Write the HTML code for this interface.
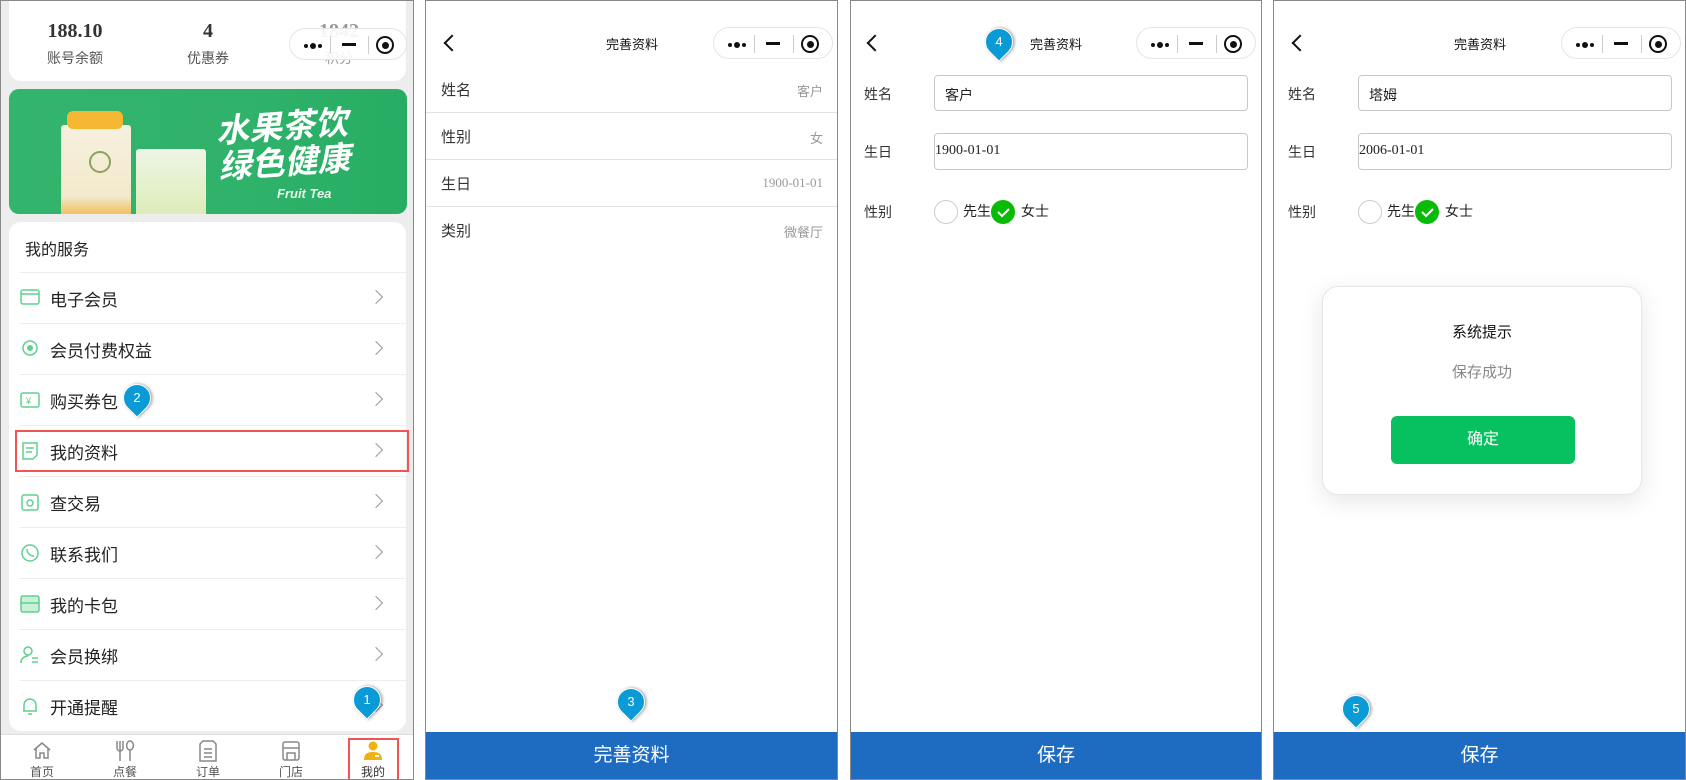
<!DOCTYPE html>
<html><head><meta charset="utf-8"><style>
*{margin:0;padding:0;box-sizing:border-box}
body{width:1686px;height:780px;position:relative;overflow:hidden;background:#fff;font-family:"Liberation Sans","Noto Sans CJK SC",sans-serif;color:#222}
.a{position:absolute}
.panel{position:absolute;top:0;height:780px;border:1.5px solid #888;overflow:hidden;background:#fff}
.cap{position:absolute;width:120px;height:32px;border:1px solid #e5e5e5;border-radius:16px;background:rgba(255,255,255,.9)}
.cap .d{position:absolute;top:15px;width:4px;height:4px;border-radius:50%;background:#111}
.cap .s{position:absolute;top:7px;width:1px;height:18px;background:#ccc}
.cap .m{position:absolute;left:52px;top:14px;width:14px;height:3px;background:#111}
.cap .o{position:absolute;left:94px;top:7px;width:18px;height:18px;border:2px solid #111;border-radius:50%}
.cap .o:after{content:"";position:absolute;left:3.5px;top:3.5px;width:7px;height:7px;border-radius:50%;background:#111}
.back{position:absolute;width:12px;height:12px;border-left:2px solid #111;border-bottom:2px solid #111;transform:rotate(45deg)}
.title{position:absolute;font-size:13px;color:#111;transform:translateX(-50%)}
.row{position:absolute;left:10px;right:0;height:51px;border-top:1px solid #eee}
.row span{position:absolute;left:31px;top:13px;font-size:17px;color:#222}
.row i{position:absolute;right:25px;top:19px;width:10px;height:10px;border-right:1.5px solid #999;border-top:1.5px solid #999;transform:rotate(45deg)}
.row svg{position:absolute;left:1px;top:15px}
.pin{position:absolute;width:28px;height:28px;border-radius:50% 50% 50% 0;transform:rotate(-45deg);background:#0a9bd6;border:1.5px solid #fff;box-shadow:1px 1px 3px rgba(0,0,0,.4)}
.pin b{position:absolute;left:0;top:0;width:100%;height:100%;transform:rotate(45deg);color:#fff;font-weight:normal;font-size:13px;text-align:center;line-height:26px}
.lab{position:absolute;font-size:15px;color:#333}
.val{position:absolute;font-size:13px;color:#999;right:14px}
.div{position:absolute;left:0;right:0;height:1px;background:#e2e2e2}
.btn{position:absolute;left:0;right:0;top:731px;height:49px;background:#1e6bc2;color:#fff;font-size:19px;text-align:center;line-height:47px}
.inp{position:absolute;border:1px solid #c8c8c8;border-radius:4px;height:36px}
.rad{position:absolute;width:24px;height:24px;border-radius:50%;border:1px solid #ccc}
.chk{position:absolute;width:24px;height:24px;border-radius:50%;background:#09bb07}
.tab{position:absolute;top:762px;font-size:12px;color:#555;transform:translateX(-50%)}
</style></head><body>

<!-- PANEL 1 -->
<div class="panel" style="left:0;width:414px;background:#ededed">
 <div class="a" style="left:8px;top:-10px;width:397px;height:90px;background:#fff;border-radius:12px"></div>
 <div class="a" style="left:74px;top:19px;transform:translateX(-50%);font:bold 20px 'Liberation Serif',serif;color:#333">188.10</div>
 <div class="a" style="left:74px;top:47px;transform:translateX(-50%);font-size:14px;color:#555;white-space:nowrap">账号余额</div>
 <div class="a" style="left:207px;top:19px;transform:translateX(-50%);font:bold 20px 'Liberation Serif',serif;color:#333">4</div>
 <div class="a" style="left:207px;top:47px;transform:translateX(-50%);font-size:14px;color:#555;white-space:nowrap">优惠券</div>
 <div class="a" style="left:338px;top:19px;transform:translateX(-50%);font:bold 20px 'Liberation Serif',serif;color:#999">1842</div>
 <div class="a" style="left:338px;top:47px;transform:translateX(-50%);font-size:14px;color:#999">积分</div>
 <div class="cap" style="left:288px;top:27px;width:118px"><span class="d" style="left:14px"></span><span class="d" style="left:20px;width:6px;height:6px;top:14px"></span><span class="d" style="left:28px"></span><span class="s" style="left:40px"></span><span class="m"></span><span class="s" style="left:78px"></span><span class="o" style="left:86px"></span></div>
 <div class="a" style="left:8px;top:88px;width:398px;height:125px;border-radius:10px;background:linear-gradient(90deg,#33b46c,#2fb26a 60%,#27ad63);overflow:hidden">
  <div class="a" style="left:52px;top:36px;width:70px;height:95px;background:linear-gradient(#f6f0df,#f3e9cc 75%,#f2b33c);border-radius:3px 3px 8px 8px"></div>
  <div class="a" style="left:58px;top:22px;width:56px;height:18px;background:#f5b632;border-radius:6px"></div>
  <div class="a" style="left:80px;top:62px;width:22px;height:22px;border:2px solid #8aa35a;border-radius:50%"></div>
  <div class="a" style="left:127px;top:60px;width:70px;height:70px;background:linear-gradient(#eef6e6,#dcebb5);border-radius:3px 3px 6px 6px"></div>
  <div class="a" style="left:208px;top:20px;font-size:33px;color:#fff;font-style:italic;font-weight:bold;line-height:36px;transform:rotate(-4deg)">水果茶饮<br>绿色健康</div>
  <div class="a" style="left:268px;top:97px;font-size:13px;color:#e8f6ec;font-style:italic;font-weight:bold">Fruit Tea</div>
 </div>
 <div class="a" style="left:8px;top:221px;width:397px;height:509px;background:#fff;border-radius:12px">
  <div class="a" style="left:16px;top:14px;font-size:16px;color:#222">我的服务</div>
  <div class="row" style="top:50px"><svg width="20" height="18"><rect x="1" y="2" width="18" height="14" rx="2" fill="none" stroke="#5fd08f" stroke-width="1.5"/><line x1="1" y1="6" x2="19" y2="6" stroke="#5fd08f" stroke-width="1.5"/></svg><span>电子会员</span><i></i></div>
  <div class="row" style="top:101px"><svg width="20" height="20"><circle cx="10" cy="9" r="7" fill="none" stroke="#5fd08f" stroke-width="1.5"/><circle cx="10" cy="9" r="3" fill="#5fd08f"/></svg><span>会员付费权益</span><i></i></div>
  <div class="row" style="top:152px"><svg width="20" height="20"><rect x="1" y="3" width="18" height="14" rx="2" fill="none" stroke="#5fd08f" stroke-width="1.5"/><text x="6" y="14" font-size="9" fill="#5fd08f">¥</text></svg><span>购买券包</span><i></i></div>
  <div class="row" style="top:203px"><svg width="20" height="20"><path d="M3 2h14v12l-4 4H3z" fill="none" stroke="#5fd08f" stroke-width="1.5"/><path d="M6 7h8M6 11h6" stroke="#5fd08f" stroke-width="1.5"/></svg><span>我的资料</span><i></i></div>
  <div class="row" style="top:254px"><svg width="20" height="20"><rect x="2" y="3" width="16" height="15" rx="2" fill="none" stroke="#5fd08f" stroke-width="1.5"/><circle cx="10" cy="11" r="3" fill="none" stroke="#5fd08f" stroke-width="1.5"/></svg><span>查交易</span><i></i></div>
  <div class="row" style="top:305px"><svg width="20" height="20"><circle cx="10" cy="10" r="8" fill="none" stroke="#5fd08f" stroke-width="1.5"/><path d="M7 6c0 4 3 7 7 7" fill="none" stroke="#5fd08f" stroke-width="1.5"/></svg><span>联系我们</span><i></i></div>
  <div class="row" style="top:356px"><svg width="20" height="20"><rect x="1" y="2" width="18" height="16" rx="2" fill="#c9f0d8" stroke="#5fd08f" stroke-width="1.5"/><path d="M1 9h18" stroke="#5fd08f" stroke-width="1.5"/></svg><span>我的卡包</span><i></i></div>
  <div class="row" style="top:407px"><svg width="20" height="20"><circle cx="8" cy="6" r="4" fill="none" stroke="#5fd08f" stroke-width="1.5"/><path d="M1 18c0-5 4-7 7-7M12 13h6M12 17h6" fill="none" stroke="#5fd08f" stroke-width="1.5"/></svg><span>会员换绑</span><i></i></div>
  <div class="row" style="top:458px"><svg width="20" height="20"><path d="M4 15V9a6 6 0 0112 0v6H3h14M8 18h4" fill="none" stroke="#5fd08f" stroke-width="1.5"/></svg><span>开通提醒</span><i></i></div>
 </div>
 <div class="a" style="left:14px;top:429px;width:394px;height:42px;border:2.5px solid #f05454"></div>
 <div class="a" style="left:0;top:733px;width:414px;height:47px;background:#fff;border-top:1px solid #ddd"></div>
 <svg class="a" style="left:31px;top:739px" width="20" height="20"><path d="M2 10L10 3l8 7M4 8v10h4v-5h4v5h4V8" fill="none" stroke="#888" stroke-width="1.5"/></svg>
 <svg class="a" style="left:114px;top:739px" width="20" height="22"><path d="M2 1v7a3 3 0 006 0V1M5 1v20M15 1a3 4 0 110 9 3 4 0 110-9M15 10v11" fill="none" stroke="#888" stroke-width="1.5"/></svg>
 <svg class="a" style="left:197px;top:739px" width="20" height="22"><path d="M5 1h10l3 3v17H2V4z" fill="none" stroke="#888" stroke-width="1.5"/><path d="M6 9h8M6 13h8M6 17h8" stroke="#888" stroke-width="1.5"/></svg>
 <svg class="a" style="left:280px;top:739px" width="20" height="22"><rect x="2" y="2" width="16" height="18" rx="2" fill="none" stroke="#888" stroke-width="1.5"/><path d="M2 8h16M6 20v-7h8v7" fill="none" stroke="#888" stroke-width="1.5"/></svg>
 <svg class="a" style="left:362px;top:740px" width="20" height="20"><circle cx="10" cy="5" r="4.5" fill="#f0b20e"/><path d="M1 19c0-6 3-8 9-8s9 2 9 8z" fill="#f0b20e"/><rect x="12" y="14" width="4" height="2" fill="#fff"/></svg>
 <div class="tab" style="left:41px">首页</div><div class="tab" style="left:124px">点餐</div><div class="tab" style="left:207px">订单</div><div class="tab" style="left:290px">门店</div><div class="tab" style="left:372px;color:#333">我的</div>
 <div class="a" style="left:347px;top:737px;width:51px;height:43px;border:2.5px solid #f05454"></div>
</div>
<div class="pin" style="left:353px;top:686px"><b>1</b></div>
<div class="pin" style="left:123px;top:384px"><b>2</b></div>

<!-- PANEL 2 -->
<div class="panel" style="left:425px;width:413px">
 <div class="back" style="left:20px;top:36px"></div>
 <div class="title" style="left:206px;top:33px">完善资料</div>
 <div class="cap" style="left:287px;top:26px"><span class="d" style="left:14px"></span><span class="d" style="left:20px;width:6px;height:6px;top:14px"></span><span class="d" style="left:28px"></span><span class="s" style="left:40px"></span><span class="m"></span><span class="s" style="left:79px"></span><span class="o" style="left:87px"></span></div>
 <div class="lab" style="left:15px;top:78px">姓名</div><div class="val" style="top:80px">客户</div>
 <div class="div" style="top:111px"></div>
 <div class="lab" style="left:15px;top:125px">性别</div><div class="val" style="top:127px">女</div>
 <div class="div" style="top:158px"></div>
 <div class="lab" style="left:15px;top:172px">生日</div><div class="val" style="top:174px;font-family:'Liberation Serif',serif">1900-01-01</div>
 <div class="div" style="top:205px"></div>
 <div class="lab" style="left:15px;top:219px">类别</div><div class="val" style="top:221px">微餐厅</div>
 <div class="btn">完善资料</div>
</div>
<div class="pin" style="left:617px;top:688px"><b>3</b></div>

<!-- PANEL 3 -->
<div class="panel" style="left:850px;width:412px">
 <div class="back" style="left:18px;top:36px"></div>
 <div class="title" style="left:205px;top:33px">完善资料</div>
 <div class="cap" style="left:285px;top:26px"><span class="d" style="left:14px"></span><span class="d" style="left:20px;width:6px;height:6px;top:14px"></span><span class="d" style="left:28px"></span><span class="s" style="left:40px"></span><span class="m"></span><span class="s" style="left:79px"></span><span class="o" style="left:87px"></span></div>
 <div class="lab" style="left:13px;top:83px;font-size:14px">姓名</div>
 <div class="inp" style="left:83px;top:74px;width:314px"></div><div class="a" style="left:94px;top:84px;font-size:14px">客户</div>
 <div class="lab" style="left:13px;top:141px;font-size:14px">生日</div>
 <div class="inp" style="left:83px;top:132px;width:314px;height:37px"></div><div class="a" style="left:84px;top:142px;font:14px 'Liberation Serif',serif">1900-01-01</div>
 <div class="lab" style="left:13px;top:201px;font-size:14px">性别</div>
 <div class="rad" style="left:83px;top:199px"></div><div class="a" style="left:112px;top:200px;font-size:14px">先生</div>
 <div class="chk" style="left:140px;top:199px"><svg width="24" height="24"><path d="M7 12l4 4 7-7" fill="none" stroke="#fff" stroke-width="2"/></svg></div><div class="a" style="left:170px;top:200px;font-size:14px">女士</div>
 <div class="btn">保存</div>
</div>
<div class="pin" style="left:985px;top:28px"><b>4</b></div>

<!-- PANEL 4 -->
<div class="panel" style="left:1273px;width:413px">
 <div class="back" style="left:20px;top:36px"></div>
 <div class="title" style="left:206px;top:33px">完善资料</div>
 <div class="cap" style="left:287px;top:26px"><span class="d" style="left:14px"></span><span class="d" style="left:20px;width:6px;height:6px;top:14px"></span><span class="d" style="left:28px"></span><span class="s" style="left:40px"></span><span class="m"></span><span class="s" style="left:79px"></span><span class="o" style="left:87px"></span></div>
 <div class="lab" style="left:14px;top:83px;font-size:14px">姓名</div>
 <div class="inp" style="left:84px;top:74px;width:314px"></div><div class="a" style="left:95px;top:84px;font-size:14px">塔姆</div>
 <div class="lab" style="left:14px;top:141px;font-size:14px">生日</div>
 <div class="inp" style="left:84px;top:132px;width:314px;height:37px"></div><div class="a" style="left:85px;top:142px;font:14px 'Liberation Serif',serif">2006-01-01</div>
 <div class="lab" style="left:14px;top:201px;font-size:14px">性别</div>
 <div class="rad" style="left:84px;top:199px"></div><div class="a" style="left:113px;top:200px;font-size:14px">先生</div>
 <div class="chk" style="left:141px;top:199px"><svg width="24" height="24"><path d="M7 12l4 4 7-7" fill="none" stroke="#fff" stroke-width="2"/></svg></div><div class="a" style="left:171px;top:200px;font-size:14px">女士</div>
 <div class="a" style="left:48px;top:285px;width:320px;height:209px;background:#fff;border:1px solid #e6e6e6;border-radius:16px;box-shadow:0 6px 24px rgba(0,0,0,.1)">
  <div class="a" style="left:0;right:0;top:34px;text-align:center;font-size:15px;color:#111">系统提示</div>
  <div class="a" style="left:0;right:0;top:74px;text-align:center;font-size:15px;color:#888">保存成功</div>
  <div class="a" style="left:68px;top:129px;width:184px;height:48px;background:#07c160;border-radius:6px;color:#fff;font-size:16px;text-align:center;line-height:48px">确定</div>
 </div>
 <div class="btn">保存</div>
</div>
<div class="pin" style="left:1342px;top:695px"><b>5</b></div>
</body></html>
